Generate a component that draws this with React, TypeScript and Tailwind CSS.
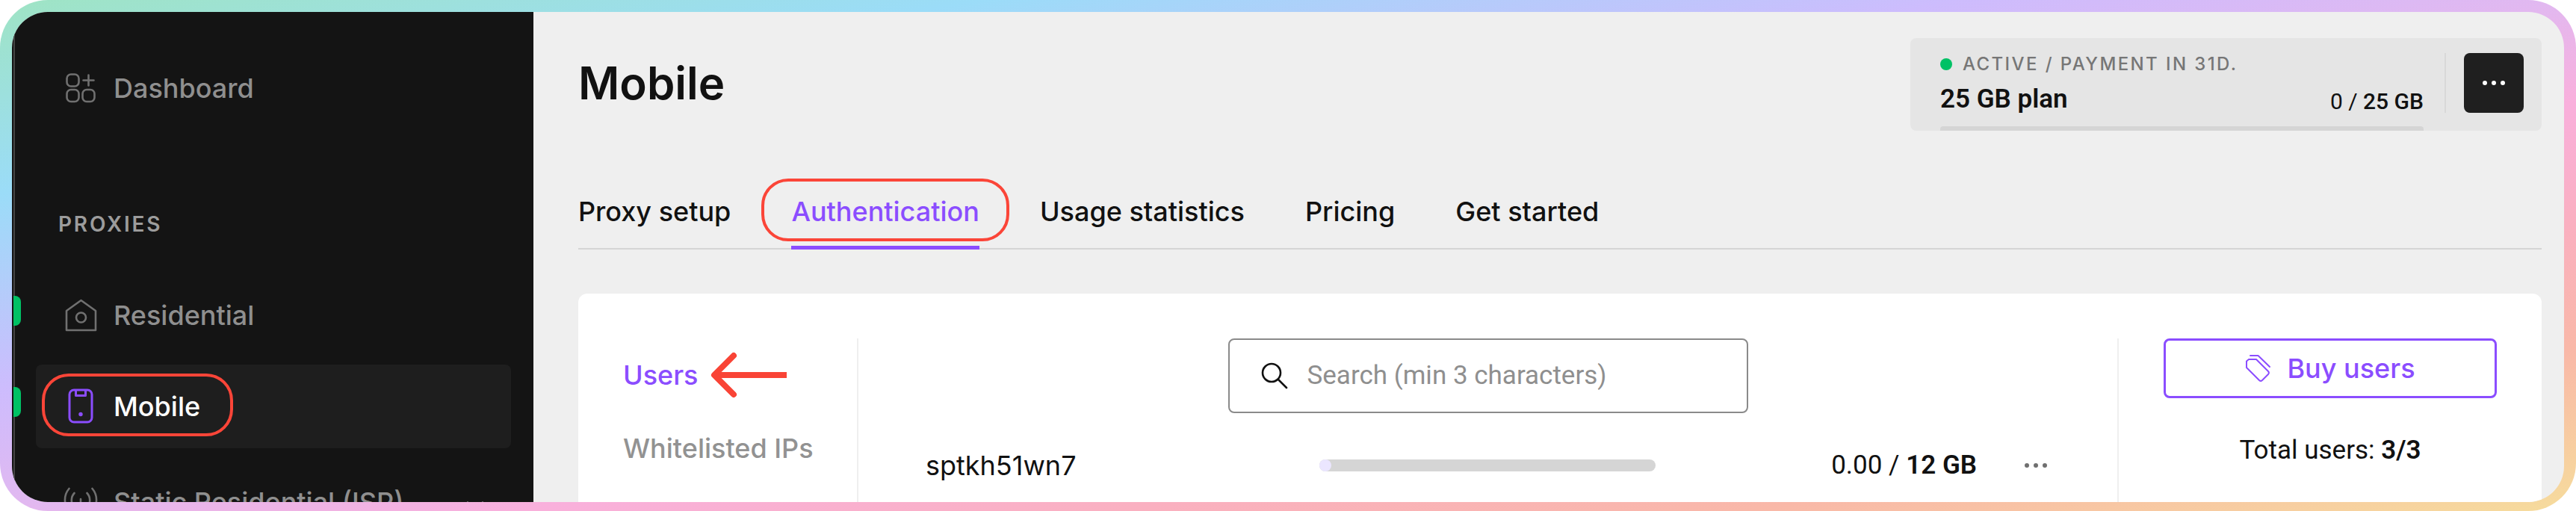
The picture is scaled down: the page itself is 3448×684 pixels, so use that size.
import { ReactNode } from 'react';

const tabs = ['Proxy setup', 'Authentication', 'Usage statistics', 'Pricing', 'Get started'];

function GridPlusIcon() {
  return (
    <svg className="h-10 w-10" viewBox="0 0 40 40" fill="none" stroke="currentColor" strokeWidth={2.6}>
      <rect x="1.5" y="1.5" width="16" height="16" rx="5.5" />
      <rect x="1.5" y="22" width="16" height="16" rx="5.5" />
      <rect x="22.5" y="22" width="16" height="16" rx="5.5" />
      <path d="M30.5 2.5v14M23.5 9.5h14" strokeLinecap="round" />
    </svg>
  );
}

function HouseIcon() {
  return (
    <svg className="h-11 w-11" viewBox="0 0 44 44" fill="none" stroke="currentColor" strokeWidth={2.6} strokeLinejoin="round">
      <path d="M3 16 22.5 2 42 16v26H3z" />
      <circle cx="22.5" cy="25" r="6.5" />
    </svg>
  );
}

function PhoneIcon() {
  return (
    <svg className="h-12 w-12" viewBox="0 0 48 48" fill="none" stroke="currentColor" strokeWidth={3}>
      <rect x="9" y="2" width="30" height="43" rx="6" />
      <path d="M17.5 3v6.5h13V3" strokeLinejoin="round" />
      <circle cx="24" cy="34.5" r="2.7" fill="currentColor" stroke="none" />
    </svg>
  );
}

function SignalIcon() {
  return (
    <svg className="h-12 w-12" viewBox="0 0 48 48" fill="none" stroke="currentColor" strokeWidth={2.6} strokeLinecap="round">
      <path d="M8.5 6a23 23 0 0 0 0 30M39.5 6a23 23 0 0 1 0 30" />
      <path d="M15.5 12a14 14 0 0 0 0 19M32.5 12a14 14 0 0 1 0 19" />
      <path d="M24 20v24" />
    </svg>
  );
}

function TagsIcon() {
  return (
    <svg className="h-10 w-9" viewBox="0 0 36 40" fill="none" stroke="currentColor" strokeWidth={2} strokeLinecap="round" strokeLinejoin="round">
      <path d="M2 19v-8.5L5 8h10l16 16a3 3 0 0 1 0 4l-8 8a3 3 0 0 1-4 0z" />
      <path d="M7 3h10.5L33 18" />
    </svg>
  );
}

interface NavItemProps {
  icon: ReactNode;
  label: string;
  active?: boolean;
  dot?: boolean;
  expandable?: boolean;
}

function NavItem({ icon, label, active, dot, expandable }: NavItemProps) {
  return (
    <a
      href="#"
      className={
        active
          ? 'relative flex h-28 items-center rounded-lg bg-[#1e1e1e] pl-5 text-white'
          : 'relative flex h-28 items-center rounded-lg pl-5 text-[#8f8f8f]'
      }
    >
      {dot && <span className="absolute -left-[30px] top-7.5 h-10 w-2.5 rounded-r-lg bg-[#00c165]" />}
      <span className={active ? 'flex w-20 justify-center text-[#8b4dff]' : 'flex w-20 justify-center text-[#707070]'}>
        {icon}
      </span>
      <span className="pl-1 text-4xl font-medium whitespace-nowrap">{label}</span>
      {expandable && (
        <svg className="mr-9 ml-auto h-4 w-6" viewBox="0 0 24 16" fill="none" stroke="currentColor" strokeWidth={2.6}>
          <path d="m1 8 11 7 11-7" />
        </svg>
      )}
      {active && <span className="absolute left-2 top-3 h-[84px] w-64 rounded-[36px] border-4 border-[#fb4538]" />}
    </a>
  );
}

function Sidebar() {
  return (
    <aside className="relative w-[698px] shrink-0 bg-[#141414] pl-8 pr-[30px]">
      <div className="absolute inset-y-0 left-0 w-1 border-r-2 border-[#444444]" />
      <nav className="pt-[46px]">
        <NavItem icon={<GridPlusIcon />} label="Dashboard" />
        <h2 className="mt-[106px] pl-[30px] text-[28px] leading-10 font-semibold tracking-widest text-[#9c9c9c]">PROXIES</h2>
        <div className="mt-[46px] flex flex-col gap-2.5">
          <NavItem icon={<HouseIcon />} label="Residential" dot />
          <NavItem icon={<PhoneIcon />} label="Mobile" active dot />
          <div className="pt-1.5">
            <NavItem icon={<SignalIcon />} label="Static Residential (ISP)" expandable />
          </div>
        </div>
      </nav>
    </aside>
  );
}

function PlanCard() {
  return (
    <section className="flex h-[124px] w-[845px] overflow-hidden rounded-lg bg-[#e5e5e5] pl-10 pt-5">
      <div className="flex w-[647px] flex-col">
        <p className="flex h-7.5 items-center gap-3.5 text-2xl font-medium tracking-widest text-[#767676]">
          <span className="h-4 w-4 rounded-full bg-[#00c165]" />
          ACTIVE / PAYMENT IN 31D.
        </p>
        <div className="flex h-16 items-center justify-between font-[Roboto] text-[#111111]">
          <span className="text-[35px] font-semibold">25 GB plan</span>
          <span className="pt-1.5 text-3xl">
            0 / <b className="font-medium">25 GB</b>
          </span>
        </div>
        <div className="mt-auto h-1.5 rounded-t-sm bg-[#d5d5d5]" />
      </div>
      <div className="ml-7 h-20 w-0.5 bg-[#d8d8d8]" />
      <button aria-label="Plan options" className="ml-6 flex h-20 w-20 items-center justify-center gap-1.5 rounded-lg bg-[#1f1f1f]">
        <span className="h-1.5 w-1.5 rounded-full bg-white" />
        <span className="h-1.5 w-1.5 rounded-full bg-white" />
        <span className="h-1.5 w-1.5 rounded-full bg-white" />
      </button>
    </section>
  );
}

function Tabs() {
  return (
    <nav className="mt-16 flex h-[95px] gap-[81px] border-b-2 border-[#d5d5d5] text-4xl font-medium">
      {tabs.map((tab) =>
        tab === 'Authentication' ? (
          <a key={tab} href="#" className="relative -mb-0.5 border-b-5 border-[#8b4dff] pt-6 text-[#8b4dff]">
            {tab}
            <span className="absolute -inset-x-10 top-0 h-[84px] rounded-[36px] border-4 border-[#fb4538]" />
          </a>
        ) : (
          <a key={tab} href="#" className="pt-6">
            {tab}
          </a>
        )
      )}
    </nav>
  );
}

function UsersPanel() {
  return (
    <section className="mt-[59px] flex h-[400px] rounded-xl bg-white pt-15">
      <nav className="w-[375px] border-r-2 border-[#efefef] pl-15 text-4xl font-medium">
        <a href="#" className="flex h-[98px] items-center gap-4 text-[#8b4dff]">
          Users
          <svg className="h-16 w-[102px]" viewBox="0 0 102 64" fill="none" stroke="#f94436" strokeWidth={8}>
            <path d="M102 32H6" />
            <path d="M31 6 5 32l26 26" strokeLinecap="round" strokeLinejoin="round" />
          </svg>
        </a>
        <a href="#" className="flex h-[98px] items-center text-[#929292]">
          Whitelisted IPs
        </a>
      </nav>

      <div className="flex-1">
        <label className="mx-auto flex h-[100px] w-[696px] items-center gap-6.5 rounded-lg border-2 border-[#8a8a8a] pl-[42px]">
          <svg className="h-9 w-9 shrink-0" viewBox="0 0 36 36" fill="none" stroke="#111111" strokeWidth={2.6} strokeLinecap="round">
            <circle cx="14" cy="14" r="12" />
            <path d="m23 23 11 11" />
          </svg>
          <input
            type="text"
            aria-label="Search users"
            placeholder="Search (min 3 characters)"
            className="w-full bg-transparent font-[Roboto] text-[35px] outline-none placeholder:text-[#8f8f8f]"
          />
        </label>
        <div className="mt-12 flex h-11 items-center pl-[90px] pr-[94px]">
          <span className="w-[527px] text-4xl">sptkh51wn7</span>
          <div className="h-4 w-[450px] rounded-full bg-[#d5d5d5]">
            <div className="h-4 w-4 rounded-full bg-[#ebe6ff]" />
          </div>
          <span className="ml-auto font-[Roboto] text-[35px]">
            0.00 / <b className="font-semibold">12 GB</b>
          </span>
          <button aria-label="User options" className="ml-16 flex items-center gap-1.5">
            <span className="h-1.5 w-1.5 rounded-full bg-[#707070]" />
            <span className="h-1.5 w-1.5 rounded-full bg-[#707070]" />
            <span className="h-1.5 w-1.5 rounded-full bg-[#707070]" />
          </button>
        </div>
      </div>

      <div className="w-[568px] border-l-2 border-[#efefef] px-15">
        <button className="flex h-20 w-full items-center justify-center gap-5 rounded-lg border-3 border-[#8b4dff] text-4xl font-medium text-[#8b4dff]">
          <TagsIcon />
          Buy users
        </button>
        <p className="mt-11 text-center font-[Roboto] text-[35px]">
          Total users: <b className="font-semibold">3/3</b>
        </p>
      </div>
    </section>
  );
}

export default function App() {
  return (
    <div className="h-screen overflow-hidden rounded-[64px] bg-[linear-gradient(to_bottom_right,#9fe4c4_0%,#9bdcf8_19%,#cdbcfd_38%,#e2b8f0_50%,#f9b0dc_60%,#fab0c0_72%,#f9b8a8_84%,#f6dc9c_100%)] px-4 pt-4 pb-3 font-[Inter,sans-serif] text-[#111111]">
      <div className="flex h-full overflow-hidden rounded-[48px] bg-[#efefef]">
        <Sidebar />
        <main className="min-w-0 flex-1 pl-[60px] pr-[30px] pt-[35px]">
          <header className="flex items-start justify-between">
            <h1 className="pt-[30px] text-6xl font-semibold">Mobile</h1>
            <PlanCard />
          </header>
          <Tabs />
          <UsersPanel />
        </main>
      </div>
    </div>
  );
}
